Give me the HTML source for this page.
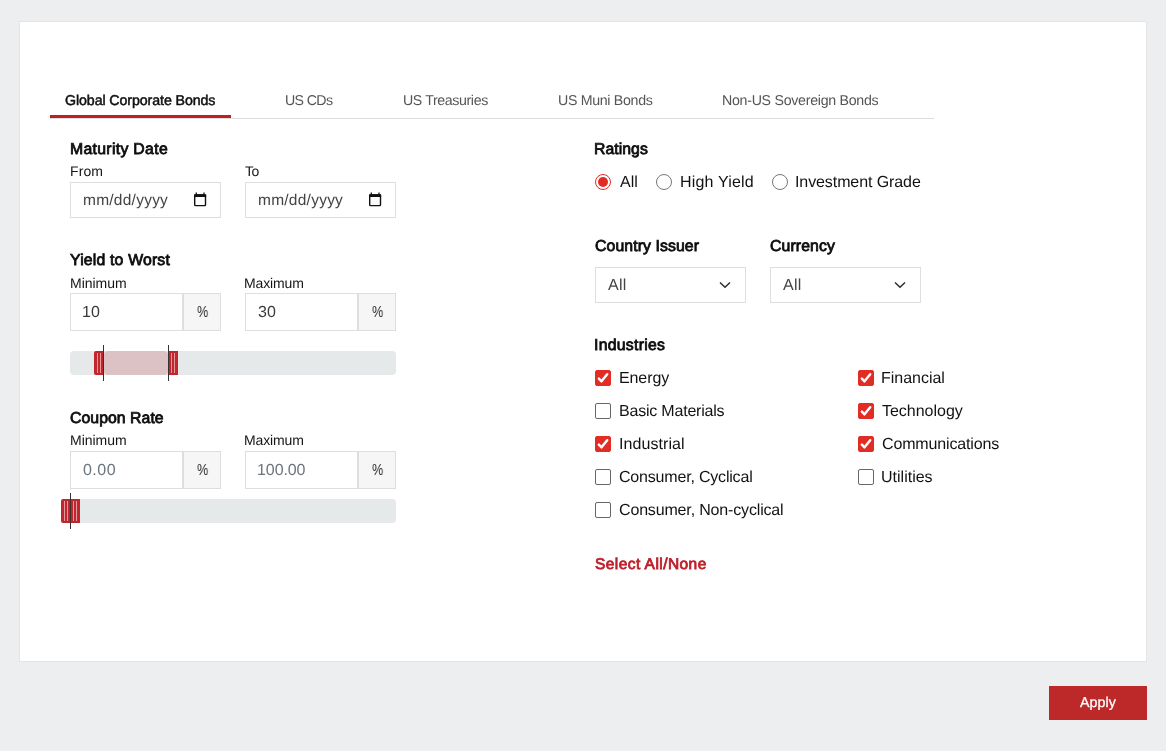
<!DOCTYPE html>
<html><head><meta charset="utf-8">
<style>
*{box-sizing:border-box;margin:0;padding:0}
html,body{width:1166px;height:751px;overflow:hidden;background:#edeef0;font-family:"Liberation Sans",sans-serif}
.t{position:absolute;white-space:nowrap;will-change:transform;text-rendering:geometricPrecision}
.card{position:absolute;left:19px;top:21px;width:1128px;height:641px;background:#fff;border:1px solid #e3e5e5}
.abs{position:absolute}
.tabline{position:absolute;left:50px;top:118px;width:884px;height:1px;background:#dedede}
.tabact{position:absolute;left:50px;top:115px;width:181px;height:3px;background:#be1f24}
.inp{position:absolute;background:#fff;border:1px solid #dedede}
.addon{position:absolute;background:#f6f6f6;border:1px solid #dedede}
.track{position:absolute;background:#e6e9e9;border-radius:4px}
.fill{position:absolute;background:#dcc2c4;border-radius:4px}
.handle{position:absolute;width:10px;height:24px;background:#c1262c}
.stripe{position:absolute;top:2px;width:1px;height:20px;background:#e49a9c}
.vline{position:absolute;width:1px;background:#333}
.radio{position:absolute;width:16px;height:16px;border-radius:50%;border:1px solid #777;background:#fff}
.radio.on{border-color:#e32d24}
.radio.on::after{content:"";position:absolute;left:2px;top:2px;width:10px;height:10px;border-radius:50%;background:#e22c22}
.sel{position:absolute;background:#fff;border:1px solid #dedede}
.cb{position:absolute;width:16px;height:16px;border:1px solid #666;border-radius:2px;background:#fff}
.cb.on{background:#e22d24;border-color:#e22d24}
.cb svg{position:absolute;left:-1px;top:-1px}
.btn{position:absolute;left:1049px;top:686px;width:98px;height:34px;background:#bd2828}
.cal{position:absolute}
</style></head><body>
<div class="card"></div>
<div class="tabline"></div>
<div class="tabact"></div>

<!-- date inputs -->
<div class="inp" style="left:70px;top:182px;width:151px;height:36px"></div>
<div class="inp" style="left:245px;top:182px;width:151px;height:36px"></div>
<svg class="cal" style="left:193px;top:191px" width="14" height="17" viewBox="0 0 14 17">
 <path d="M3.3 1.6v2 M11 1.6v2" stroke="#111" stroke-width="1.3"/>
 <rect x="1.7" y="4" width="10.8" height="10.6" rx="0.8" fill="none" stroke="#111" stroke-width="1.4"/>
 <rect x="1" y="3.3" width="12.2" height="2.8" rx="0.6" fill="#111"/>
</svg>
<svg class="cal" style="left:368px;top:191px" width="14" height="17" viewBox="0 0 14 17">
 <path d="M3.3 1.6v2 M11 1.6v2" stroke="#111" stroke-width="1.3"/>
 <rect x="1.7" y="4" width="10.8" height="10.6" rx="0.8" fill="none" stroke="#111" stroke-width="1.4"/>
 <rect x="1" y="3.3" width="12.2" height="2.8" rx="0.6" fill="#111"/>
</svg>

<!-- input groups yield -->
<div class="inp" style="left:70px;top:293px;width:113px;height:38px"></div>
<div class="addon" style="left:183px;top:293px;width:38px;height:38px"></div>
<div class="inp" style="left:245px;top:293px;width:113px;height:38px"></div>
<div class="addon" style="left:358px;top:293px;width:38px;height:38px"></div>

<!-- slider 1 -->
<div class="track" style="left:70px;top:351px;width:326px;height:24px"></div>
<div class="fill" style="left:104px;top:351px;width:64px;height:24px"></div>
<div class="handle" style="left:94px;top:351px;border-radius:2px 0 0 2px"><div class="stripe" style="left:3px"></div><div class="stripe" style="left:6px"></div></div>
<div class="handle" style="left:169px;top:351px;width:9px;border-radius:0"><div class="stripe" style="left:2px"></div><div class="stripe" style="left:5px"></div></div>
<div class="vline" style="left:103px;top:345px;height:36px"></div>
<div class="vline" style="left:168px;top:345px;height:36px"></div>

<!-- input groups coupon -->
<div class="inp" style="left:70px;top:451px;width:113px;height:38px"></div>
<div class="addon" style="left:183px;top:451px;width:38px;height:38px"></div>
<div class="inp" style="left:245px;top:451px;width:113px;height:38px"></div>
<div class="addon" style="left:358px;top:451px;width:38px;height:38px"></div>

<!-- slider 2 -->
<div class="track" style="left:70px;top:499px;width:326px;height:24px"></div>
<div class="handle" style="left:61px;top:499px;width:10px;border-radius:2px 0 0 2px"><div class="stripe" style="left:3px"></div><div class="stripe" style="left:6px"></div></div>
<div class="handle" style="left:71px;top:499px;width:9px;border-radius:0"><div class="stripe" style="left:2px"></div><div class="stripe" style="left:5px"></div></div>
<div class="vline" style="left:70px;top:493px;height:36px"></div>

<!-- radios -->
<div class="radio on" style="left:595px;top:174px"></div>
<div class="radio" style="left:656px;top:174px"></div>
<div class="radio" style="left:772px;top:174px"></div>

<!-- selects -->
<div class="sel" style="left:595px;top:267px;width:151px;height:36px"></div>
<div class="sel" style="left:770px;top:267px;width:151px;height:36px"></div>
<svg class="abs" style="left:719px;top:281px" width="12" height="8" viewBox="0 0 12 8"><path d="M1 1.5 L6 6.3 L11 1.5" fill="none" stroke="#2a2e33" stroke-width="1.5"/></svg>
<svg class="abs" style="left:894px;top:281px" width="12" height="8" viewBox="0 0 12 8"><path d="M1 1.5 L6 6.3 L11 1.5" fill="none" stroke="#2a2e33" stroke-width="1.5"/></svg>

<div class="btn"></div>
<div class="cb on" style="left:595px;top:370px"><svg width="16" height="16" viewBox="0 0 16 16"><path d="M3.9 8.7 L6.5 11.3 L12.2 4.3" fill="none" stroke="#fff" stroke-width="2.5" stroke-linecap="round" stroke-linejoin="round"/></svg></div>
<div class="cb" style="left:595px;top:403px"></div>
<div class="cb on" style="left:595px;top:436px"><svg width="16" height="16" viewBox="0 0 16 16"><path d="M3.9 8.7 L6.5 11.3 L12.2 4.3" fill="none" stroke="#fff" stroke-width="2.5" stroke-linecap="round" stroke-linejoin="round"/></svg></div>
<div class="cb" style="left:595px;top:469px"></div>
<div class="cb" style="left:595px;top:502px"></div>
<div class="cb on" style="left:858px;top:370px"><svg width="16" height="16" viewBox="0 0 16 16"><path d="M3.9 8.7 L6.5 11.3 L12.2 4.3" fill="none" stroke="#fff" stroke-width="2.5" stroke-linecap="round" stroke-linejoin="round"/></svg></div>
<div class="cb on" style="left:858px;top:403px"><svg width="16" height="16" viewBox="0 0 16 16"><path d="M3.9 8.7 L6.5 11.3 L12.2 4.3" fill="none" stroke="#fff" stroke-width="2.5" stroke-linecap="round" stroke-linejoin="round"/></svg></div>
<div class="cb on" style="left:858px;top:436px"><svg width="16" height="16" viewBox="0 0 16 16"><path d="M3.9 8.7 L6.5 11.3 L12.2 4.3" fill="none" stroke="#fff" stroke-width="2.5" stroke-linecap="round" stroke-linejoin="round"/></svg></div>
<div class="cb" style="left:858px;top:469px"></div>
<div class="t" style="left:64.89px;top:93px;font-size:14.2px;line-height:16px;font-weight:400;color:#111;letter-spacing:-0.084px;-webkit-text-stroke:0.5px #111">Global Corporate Bonds</div>
<div class="t" style="left:285.10px;top:93px;font-size:14.2px;line-height:16px;font-weight:400;color:#555;letter-spacing:-0.640px">US CDs</div>
<div class="t" style="left:402.60px;top:93px;font-size:14.2px;line-height:16px;font-weight:400;color:#555;letter-spacing:-0.388px">US Treasuries</div>
<div class="t" style="left:557.80px;top:93px;font-size:14.2px;line-height:16px;font-weight:400;color:#555;letter-spacing:-0.313px">US Muni Bonds</div>
<div class="t" style="left:722.33px;top:93px;font-size:14.2px;line-height:16px;font-weight:400;color:#555;letter-spacing:-0.277px">Non-US Sovereign Bonds</div>
<div class="t" style="left:69.60px;top:141px;font-size:15.8px;line-height:18px;font-weight:400;color:#0d0d0d;letter-spacing:0.312px;-webkit-text-stroke:0.8px #0d0d0d">Maturity Date</div>
<div class="t" style="left:69.94px;top:163px;font-size:14px;line-height:16px;font-weight:400;color:#141414;letter-spacing:0.103px">From</div>
<div class="t" style="left:245.19px;top:163px;font-size:14px;line-height:16px;font-weight:400;color:#141414;letter-spacing:-0.495px">To</div>
<div class="t" style="left:70.34px;top:252px;font-size:15.8px;line-height:18px;font-weight:400;color:#0d0d0d;letter-spacing:0.184px;-webkit-text-stroke:0.8px #0d0d0d">Yield to Worst</div>
<div class="t" style="left:69.55px;top:275px;font-size:14px;line-height:16px;font-weight:400;color:#141414;letter-spacing:-0.018px">Minimum</div>
<div class="t" style="left:244.34px;top:275px;font-size:14px;line-height:16px;font-weight:400;color:#141414;letter-spacing:-0.132px">Maximum</div>
<div class="t" style="left:69.91px;top:410px;font-size:15.8px;line-height:18px;font-weight:400;color:#0d0d0d;letter-spacing:0.056px;-webkit-text-stroke:0.8px #0d0d0d">Coupon Rate</div>
<div class="t" style="left:69.55px;top:432px;font-size:14px;line-height:16px;font-weight:400;color:#141414;letter-spacing:-0.018px">Minimum</div>
<div class="t" style="left:244.34px;top:432px;font-size:14px;line-height:16px;font-weight:400;color:#141414;letter-spacing:-0.132px">Maximum</div>
<div class="t" style="left:594.20px;top:141px;font-size:15.8px;line-height:18px;font-weight:400;color:#0d0d0d;letter-spacing:0.049px;-webkit-text-stroke:0.8px #0d0d0d">Ratings</div>
<div class="t" style="left:619.96px;top:174px;font-size:16px;line-height:18px;font-weight:400;color:#121212;letter-spacing:0.010px">All</div>
<div class="t" style="left:679.78px;top:174px;font-size:16px;line-height:18px;font-weight:400;color:#121212;letter-spacing:0.187px">High Yield</div>
<div class="t" style="left:795.32px;top:174px;font-size:16px;line-height:18px;font-weight:400;color:#121212;letter-spacing:-0.093px">Investment Grade</div>
<div class="t" style="left:594.71px;top:238px;font-size:15.8px;line-height:18px;font-weight:400;color:#0d0d0d;letter-spacing:0.099px;-webkit-text-stroke:0.8px #0d0d0d">Country Issuer</div>
<div class="t" style="left:770.01px;top:238px;font-size:15.8px;line-height:18px;font-weight:400;color:#0d0d0d;letter-spacing:0.103px;-webkit-text-stroke:0.8px #0d0d0d">Currency</div>
<div class="t" style="left:594.04px;top:337px;font-size:15.8px;line-height:18px;font-weight:400;color:#0d0d0d;letter-spacing:0.280px;-webkit-text-stroke:0.8px #0d0d0d">Industries</div>
<div class="t" style="left:618.68px;top:370px;font-size:16px;line-height:18px;font-weight:400;color:#121212;letter-spacing:-0.104px">Energy</div>
<div class="t" style="left:618.68px;top:403px;font-size:16px;line-height:18px;font-weight:400;color:#121212;letter-spacing:-0.207px">Basic Materials</div>
<div class="t" style="left:618.52px;top:436px;font-size:16px;line-height:18px;font-weight:400;color:#121212;letter-spacing:0.071px">Industrial</div>
<div class="t" style="left:619.20px;top:469px;font-size:16px;line-height:18px;font-weight:400;color:#121212;letter-spacing:-0.191px">Consumer, Cyclical</div>
<div class="t" style="left:619.20px;top:502px;font-size:16px;line-height:18px;font-weight:400;color:#121212;letter-spacing:-0.162px">Consumer, Non-cyclical</div>
<div class="t" style="left:881.08px;top:370px;font-size:16px;line-height:18px;font-weight:400;color:#121212;letter-spacing:-0.018px">Financial</div>
<div class="t" style="left:882.04px;top:403px;font-size:16px;line-height:18px;font-weight:400;color:#121212;letter-spacing:-0.018px">Technology</div>
<div class="t" style="left:881.60px;top:436px;font-size:16px;line-height:18px;font-weight:400;color:#121212;letter-spacing:-0.154px">Communications</div>
<div class="t" style="left:881.16px;top:469px;font-size:16px;line-height:18px;font-weight:400;color:#121212;letter-spacing:0.005px">Utilities</div>
<div class="t" style="left:594.70px;top:556px;font-size:15.5px;line-height:18px;font-weight:400;color:#bd1f29;letter-spacing:0.440px;-webkit-text-stroke:0.8px #bd1f29">Select All/None</div>
<div class="t" style="left:1079.96px;top:695px;font-size:14.2px;line-height:16px;font-weight:400;color:#fff;letter-spacing:0.084px;-webkit-text-stroke:0.3px #fff">Apply</div>
<div class="t" style="left:82.95px;top:192px;font-size:15.5px;line-height:18px;font-weight:400;color:#444;letter-spacing:0.244px">mm/dd/yyyy</div>
<div class="t" style="left:257.95px;top:192px;font-size:15.5px;line-height:18px;font-weight:400;color:#444;letter-spacing:0.244px">mm/dd/yyyy</div>
<div class="t" style="left:82.20px;top:304px;font-size:16px;line-height:18px;font-weight:400;color:#3a3a3a;letter-spacing:0.000px">10</div>
<div class="t" style="left:257.60px;top:304px;font-size:16px;line-height:18px;font-weight:400;color:#3a3a3a;letter-spacing:0.000px">30</div>
<div class="t" style="left:196.55px;top:304px;font-size:16px;line-height:18px;font-weight:400;color:#333;letter-spacing:0.000px;transform:scaleX(0.7951);transform-origin:0 0">%</div>
<div class="t" style="left:371.55px;top:304px;font-size:16px;line-height:18px;font-weight:400;color:#333;letter-spacing:0.000px;transform:scaleX(0.7951);transform-origin:0 0">%</div>
<div class="t" style="left:82.86px;top:462px;font-size:16px;line-height:18px;font-weight:400;color:#6c757d;letter-spacing:0.473px">0.00</div>
<div class="t" style="left:257.00px;top:462px;font-size:16px;line-height:18px;font-weight:400;color:#6c757d;letter-spacing:-0.084px">100.00</div>
<div class="t" style="left:196.55px;top:462px;font-size:16px;line-height:18px;font-weight:400;color:#333;letter-spacing:0.000px;transform:scaleX(0.7951);transform-origin:0 0">%</div>
<div class="t" style="left:371.55px;top:462px;font-size:16px;line-height:18px;font-weight:400;color:#333;letter-spacing:0.000px;transform:scaleX(0.7951);transform-origin:0 0">%</div>
<div class="t" style="left:608.16px;top:277px;font-size:16px;line-height:18px;font-weight:400;color:#444;letter-spacing:0.310px">All</div>
<div class="t" style="left:783.16px;top:277px;font-size:16px;line-height:18px;font-weight:400;color:#444;letter-spacing:0.310px">All</div>
</body></html>
